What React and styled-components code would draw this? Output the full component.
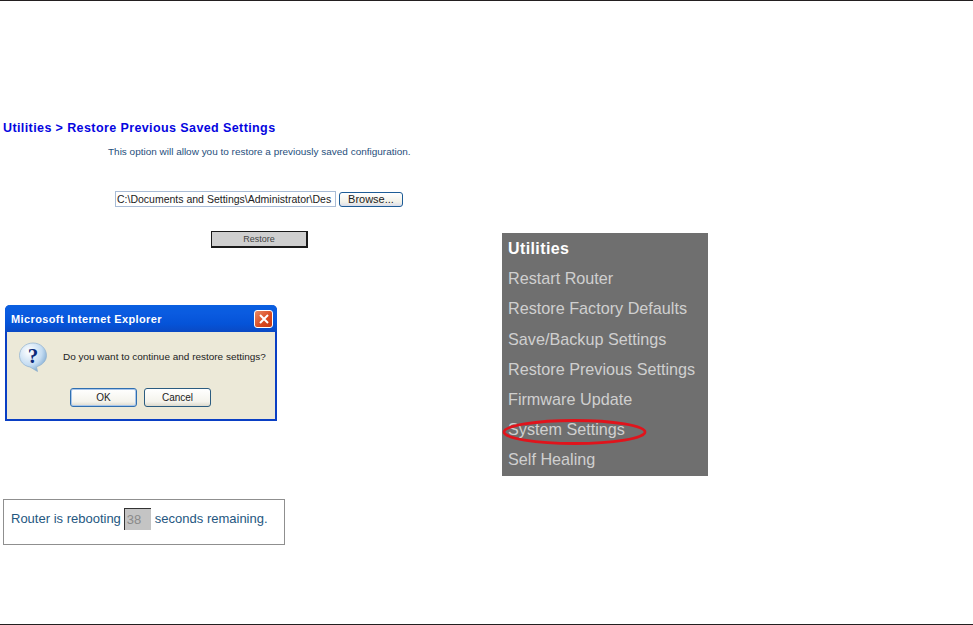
import React from "react";
import styled, { createGlobalStyle } from "styled-components";

const GlobalStyle = createGlobalStyle`
  html, body {
    margin: 0;
    padding: 0;
    background: #fff;
  }
  body {
    font-family: "Liberation Sans", Arial, sans-serif;
  }
`;

const Page = styled.div`
  width: 973px;
  height: 625px;
  box-sizing: border-box;
  border-top: 1px solid #231f20;
  border-bottom: 1px solid #231f20;
  display: flex;
  overflow: hidden;
`;

const LeftColumn = styled.div`
  width: 502px;
  flex: none;
  padding: 120px 0 0 3px;
  box-sizing: border-box;
`;

const Heading = styled.h1`
  margin: 0;
  font-size: 12.5px;
  line-height: 14px;
  font-weight: bold;
  letter-spacing: 0.4px;
  color: #0505e0;
`;

const Intro = styled.p`
  margin: 11px 0 0 105px;
  font-size: 9.97px;
  line-height: 12px;
  color: #1f4f7c;
`;

const FileRow = styled.div`
  display: flex;
  align-items: center;
  gap: 3px;
  margin: 33px 0 0 112px;
`;

const PathField = styled.div`
  width: 218px;
  height: 14px;
  border: 1px solid #a9bcd6;
  font-size: 10.5px;
  line-height: 14px;
  padding-left: 1px;
  overflow: hidden;
  white-space: nowrap;
  color: #222;
`;

const BrowseButton = styled.div`
  width: 62px;
  height: 13px;
  border: 1px solid #1d5c96;
  border-radius: 3px;
  background: linear-gradient(#ffffff, #f2f1e8 70%, #d9dcea);
  font-size: 11px;
  line-height: 13px;
  text-align: center;
  color: #222;
`;

const RestoreRow = styled.div`
  margin: 24px 0 0 208px;
`;

const RestoreButton = styled.div`
  width: 94px;
  height: 14px;
  border: 1px solid #1a1a1a;
  border-right-width: 2px;
  border-bottom-width: 2px;
  background: #cfcfcf;
  font-size: 9px;
  line-height: 14px;
  text-align: center;
  color: #444;
`;

const Dialog = styled.div`
  width: 272px;
  height: 116px;
  margin: 57px 0 0 2px;
  box-sizing: border-box;
  display: flex;
  flex-direction: column;
  background: #ece9d8;
  border: 2px solid #0a3fc4;
  border-top: 0;
  border-radius: 5px 5px 0 0;
`;

const TitleBar = styled.div`
  height: 27px;
  flex: none;
  box-sizing: border-box;
  margin: 0 -2px;
  padding: 1px 4px 0 6px;
  display: flex;
  align-items: center;
  justify-content: space-between;
  border-radius: 5px 5px 0 0;
  background: linear-gradient(#0a5fe0, #0a5be0 30%, #0553d8 70%, #0a49c4);
`;

const TitleText = styled.span`
  font-size: 11px;
  font-weight: bold;
  letter-spacing: 0.38px;
  color: #fff;
`;

const CloseBox = styled.div`
  width: 19px;
  height: 18px;
  box-sizing: border-box;
  display: flex;
  align-items: center;
  justify-content: center;
  border: 1px solid #fff;
  border-radius: 3px;
  background: linear-gradient(135deg, #eb8a66, #d9481f 60%, #c63a14);
`;

const DialogBody = styled.div`
  display: flex;
  align-items: flex-start;
  padding: 10px 0 0 11px;
`;

const Message = styled.p`
  margin: 8px 0 0 15px;
  font-size: 9.97px;
  line-height: 14px;
  white-space: nowrap;
  color: #222;
`;

const DialogButtons = styled.div`
  display: flex;
  gap: 7px;
  margin: 16px 0 0 63px;
`;

const DialogButton = styled.div`
  width: 65px;
  height: 17px;
  border: 1px solid ${(p) => (p.$primary ? "#2f6fb0" : "#2b5c80")};
  box-shadow: ${(p) => (p.$primary ? "inset 0 0 0 1px #a9c6ea" : "none")};
  border-radius: 3px;
  background: linear-gradient(#ffffff, #f4f3ec 75%, #dcd9cc);
  font-size: 10px;
  line-height: 17px;
  text-align: center;
  color: #222;
`;

const StatusBox = styled.div`
  width: 282px;
  height: 46px;
  box-sizing: border-box;
  margin: 78px 0 0 0;
  padding: 8px 0 0 7px;
  display: flex;
  align-items: flex-start;
  border: 1px solid #8f8f8f;
  font-size: 13px;
  line-height: 22px;
  white-space: nowrap;
  color: #25577f;
`;

const Countdown = styled.span`
  width: 27px;
  height: 22px;
  box-sizing: border-box;
  margin: 0 4px 0 3px;
  padding-left: 2px;
  border-top: 1px solid #333;
  border-left: 1px solid #333;
  background: #c4c4c4;
  color: #8a8a8a;
  font-size: 13px;
  line-height: 22px;
`;

const Menu = styled.nav`
  position: relative;
  width: 206px;
  height: 243px;
  flex: none;
  margin-top: 232px;
  background: #6f6f6f;
`;

const MenuItem = styled.div`
  height: 30.2px;
  padding-left: 6px;
  font-size: ${(p) => (p.$title ? "16px" : "16.2px")};
  font-weight: ${(p) => (p.$title ? "bold" : "normal")};
  letter-spacing: ${(p) => (p.$title ? "0.4px" : "0")};
  line-height: ${(p) => (p.$title ? "31px" : "30px")};
  white-space: nowrap;
  color: ${(p) => (p.$title ? "#fff" : "#cfcfcf")};
`;

const Ring = styled.svg`
  position: absolute;
  left: 0;
  top: 186px;
`;

const items = [
  "Restart Router",
  "Restore Factory Defaults",
  "Save/Backup Settings",
  "Restore Previous Settings",
  "Firmware Update",
  "System Settings",
  "Self Healing",
];

function QuestionIcon() {
  return (
    <svg width="30" height="30" viewBox="0 0 30 30">
      <defs>
        <radialGradient id="bubble" cx="0.35" cy="0.3" r="0.8">
          <stop offset="0" stopColor="#ffffff" />
          <stop offset="0.6" stopColor="#c4dcf2" />
          <stop offset="1" stopColor="#6f9ec9" />
        </radialGradient>
      </defs>
      <path
        d="M15 1C7.5 1 1.5 6.5 1.5 13.5C1.5 19.5 6 24 12 25L19.5 29.5L18.5 24.8C24.5 23 28.5 18.8 28.5 13.5C28.5 6.5 22.5 1 15 1Z"
        fill="url(#bubble)"
        stroke="#8fb0cf"
        strokeWidth="0.7"
      />
      <text
        x="15"
        y="21"
        textAnchor="middle"
        fontFamily="Liberation Serif, serif"
        fontSize="21"
        fontWeight="bold"
        fill="#0c2a7a"
      >
        ?
      </text>
    </svg>
  );
}

export default function App() {
  return (
    <>
      <GlobalStyle />
      <Page>
        <LeftColumn>
          <Heading>Utilities &gt; Restore Previous Saved Settings</Heading>
          <Intro>This option will allow you to restore a previously saved configuration.</Intro>
          <FileRow>
            <PathField>C:\Documents and Settings\Administrator\Des</PathField>
            <BrowseButton>Browse...</BrowseButton>
          </FileRow>
          <RestoreRow>
            <RestoreButton>Restore</RestoreButton>
          </RestoreRow>
          <Dialog>
            <TitleBar>
              <TitleText>Microsoft Internet Explorer</TitleText>
              <CloseBox>
                <svg width="12" height="12" viewBox="0 0 12 12">
                  <path d="M2 2L10 10M10 2L2 10" stroke="#fff" strokeWidth="2" />
                </svg>
              </CloseBox>
            </TitleBar>
            <DialogBody>
              <QuestionIcon />
              <Message>Do you want to continue and restore settings?</Message>
            </DialogBody>
            <DialogButtons>
              <DialogButton $primary>OK</DialogButton>
              <DialogButton>Cancel</DialogButton>
            </DialogButtons>
          </Dialog>
          <StatusBox>
            Router is rebooting
            <Countdown>38</Countdown>
            seconds remaining.
          </StatusBox>
        </LeftColumn>
        <Menu>
          <MenuItem $title>Utilities</MenuItem>
          {items.map((item) => (
            <MenuItem key={item}>{item}</MenuItem>
          ))}
          <Ring width="150" height="30" viewBox="0 0 150 30">
            <ellipse cx="72.5" cy="13" rx="70.5" ry="11.5" fill="none" stroke="#e0141c" strokeWidth="2.8" />
          </Ring>
        </Menu>
      </Page>
    </>
  );
}
